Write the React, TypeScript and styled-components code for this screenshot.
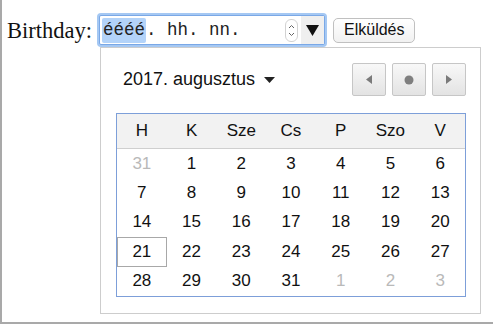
import React from 'react';
import styled, { createGlobalStyle } from 'styled-components';

const Global = createGlobalStyle`
  html, body { margin: 0; padding: 0; background: #fff; }
  body { font-family: "Liberation Serif", "Times New Roman", serif; }
`;

const Frame = styled.div`
  width: 493px;
  height: 324px;
  box-sizing: border-box;
  border-left: 2px solid #a9a9a9;
  border-bottom: 2px solid #a9a9a9;
  padding: 15px 0 0 5px;
  overflow: hidden;
`;

const FormRow = styled.div`
  display: flex;
  align-items: center;
`;

const Label = styled.label`
  font-size: 22.5px;
  color: #111;
  margin-right: 7px;
  line-height: 29px;
`;

const InputWrap = styled.div`
  position: relative;
  width: 226px;
  height: 30px;
  box-sizing: border-box;
  border: 1px solid #7aa8e6;
  box-shadow: 0 0 0 2px #a5c8f3;
  border-radius: 2px;
  display: flex;
  align-items: center;
  padding-left: 2px;
  background: #fff;
`;

const Segments = styled.div`
  flex: 1;
  font-family: "Liberation Mono", "Courier New", monospace;
  font-size: 17.5px;
  color: #222;
  display: flex;
  align-items: center;
  white-space: pre;
`;

const Seg = styled.span<{ $active?: boolean }>`
  padding: 2px ${(p) => (p.$active ? '1px' : '0')} 3px;
  background: ${(p) => (p.$active ? '#b3d3f9' : 'transparent')};
  border-radius: 2px;
`;

const Spinner = styled.div`
  width: 11px;
  height: 21px;
  border: 1px solid #d2d2d2;
  border-radius: 6px;
  display: flex;
  flex-direction: column;
  align-items: center;
  justify-content: center;
  margin-right: 3px;
`;

const DropBtn = styled.div`
  width: 23px;
  height: 28px;
  background: #efefef;
  display: flex;
  align-items: center;
  justify-content: center;
`;

const Submit = styled.button`
  margin-left: 8px;
  height: 25px;
  padding: 0 10px;
  border: 1px solid #c0c0c0;
  border-radius: 5px;
  background: linear-gradient(#ffffff, #f1f1f1);
  font-family: "Liberation Sans", Arial, sans-serif;
  font-size: 16px;
  color: #111;
`;

const Popup = styled.div`
  position: absolute;
  top: 31px;
  left: 0;
  width: 381px;
  height: 267px;
  box-sizing: border-box;
  border: 1px solid #cdcdcd;
  background: #fff;
  padding: 15px 14px 0 15px;
  font-family: "Liberation Sans", Arial, sans-serif;
`;

const PopHead = styled.div`
  display: flex;
  align-items: center;
  justify-content: space-between;
  height: 33px;
`;

const Month = styled.div`
  margin-left: 7px;
  font-size: 18px;
  color: #111;
  display: flex;
  align-items: center;
  gap: 9px;
`;

const NavGroup = styled.div`
  display: flex;
  gap: 6px;
`;

const NavBtn = styled.div`
  width: 34px;
  height: 33px;
  box-sizing: border-box;
  border: 1px solid #c6c6c6;
  border-radius: 2px;
  background: linear-gradient(#f8f8f8, #e3e3e3);
  display: flex;
  align-items: center;
  justify-content: center;
`;

const Table = styled.div`
  margin-top: 17px;
  width: 350px;
  box-sizing: border-box;
  border: 1px solid #7d9fd9;
`;

const Grid = styled.div<{ $head?: boolean }>`
  display: grid;
  grid-template-columns: repeat(7, 1fr);
  background: ${(p) => (p.$head ? '#f2f2f2' : '#fff')};
  border-bottom: ${(p) => (p.$head ? '1px solid #cfcfcf' : 'none')};
`;

const HeadCell = styled.div`
  height: 34px;
  display: flex;
  align-items: center;
  justify-content: center;
  font-size: 17px;
  color: #111;
`;

const Day = styled.div<{ $muted?: boolean; $today?: boolean }>`
  height: 29.4px;
  box-sizing: border-box;
  display: flex;
  align-items: center;
  justify-content: center;
  font-size: 17px;
  color: ${(p) => (p.$muted ? '#b9b9b9' : '#111')};
  border: 1px solid ${(p) => (p.$today ? '#a8a8a8' : 'transparent')};
`;

const heads = ['H', 'K', 'Sze', 'Cs', 'P', 'Szo', 'V'];

const days: { n: number; m?: boolean }[] = [
  { n: 31, m: true },
  ...Array.from({ length: 31 }, (_, i) => ({ n: i + 1 })),
  { n: 1, m: true },
  { n: 2, m: true },
  { n: 3, m: true },
];

export default function App() {
  return (
    <>
      <Global />
      <Frame>
        <FormRow>
          <Label>Birthday:</Label>
          <InputWrap>
            <Segments>
              <Seg $active>éééé</Seg>
              <Seg>. hh. nn.</Seg>
            </Segments>
            <Spinner>
              <svg width="7" height="15" viewBox="0 0 7 15">
                <path d="M1 5 L3.5 2.5 L6 5" fill="none" stroke="#666" strokeWidth="1" />
                <path d="M1 10 L3.5 12.5 L6 10" fill="none" stroke="#666" strokeWidth="1" />
              </svg>
            </Spinner>
            <DropBtn>
              <svg width="13" height="11" viewBox="0 0 13 11">
                <path d="M0 0 H13 L6.5 11 Z" fill="#111" />
              </svg>
            </DropBtn>
            <Popup>
              <PopHead>
                <Month>
                  2017. augusztus
                  <svg width="11" height="6" viewBox="0 0 11 6">
                    <path d="M0 0 H11 L5.5 6 Z" fill="#222" />
                  </svg>
                </Month>
                <NavGroup>
                  <NavBtn>
                    <svg width="6" height="9" viewBox="0 0 6 9">
                      <path d="M6 0 V9 L0 4.5 Z" fill="#7a7a7a" />
                    </svg>
                  </NavBtn>
                  <NavBtn>
                    <svg width="10" height="10" viewBox="0 0 10 10">
                      <circle cx="5" cy="5" r="4.5" fill="#7f7f7f" />
                    </svg>
                  </NavBtn>
                  <NavBtn>
                    <svg width="6" height="9" viewBox="0 0 6 9">
                      <path d="M0 0 V9 L6 4.5 Z" fill="#7a7a7a" />
                    </svg>
                  </NavBtn>
                </NavGroup>
              </PopHead>
              <Table>
                <Grid $head>
                  {heads.map((h) => (
                    <HeadCell key={h}>{h}</HeadCell>
                  ))}
                </Grid>
                <Grid>
                  {days.map((d, i) => (
                    <Day key={i} $muted={d.m} $today={!d.m && d.n === 21}>
                      {d.n}
                    </Day>
                  ))}
                </Grid>
              </Table>
            </Popup>
          </InputWrap>
          <Submit>Elküldés</Submit>
        </FormRow>
      </Frame>
    </>
  );
}
